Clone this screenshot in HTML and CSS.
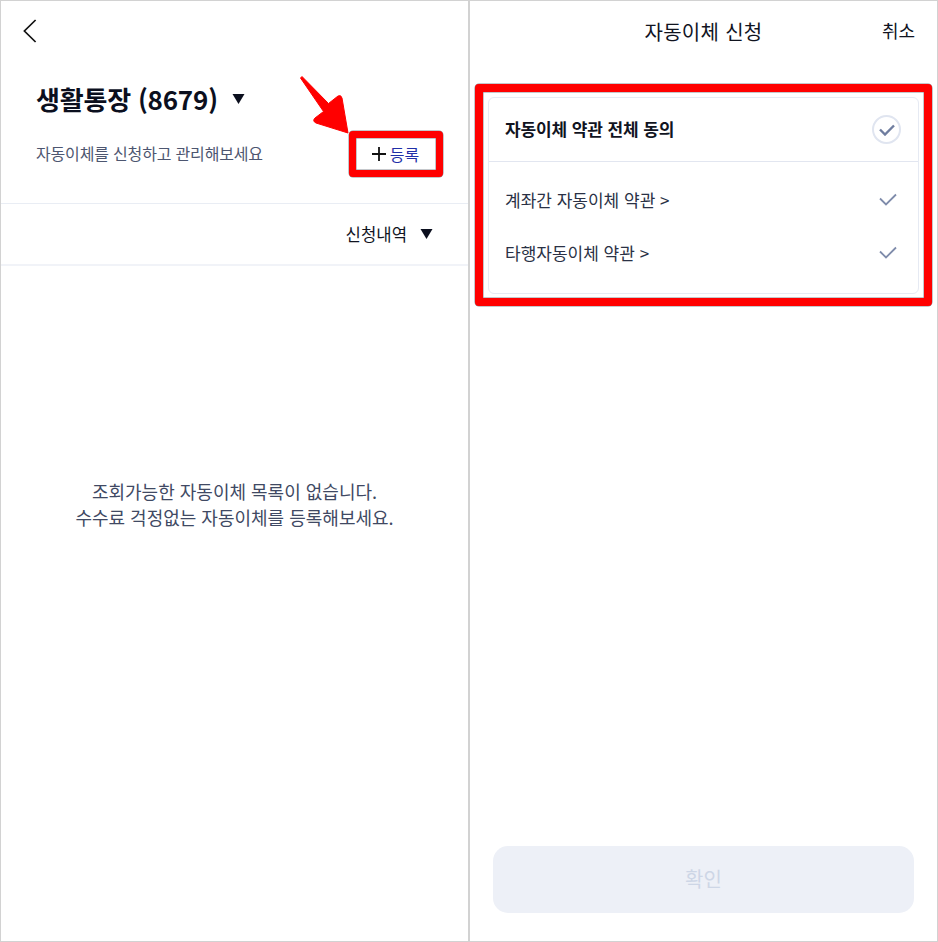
FILE: index.html
```html
<!DOCTYPE html>
<html lang="ko">
<head>
<meta charset="utf-8">
<title>자동이체</title>
<link rel="stylesheet" href="styles.css">
</head>
<body>
<div class="page">
  <section class="panel left">
    <div class="back-row">
      <svg class="back" width="14" height="24" viewBox="0 0 14 24"><path d="M12.6 1 1.4 12l11.2 11" fill="none" stroke="#111" stroke-width="1.7"/></svg>
    </div>
    <div class="account">
      <h1>생활통장 (8679)</h1>
      <svg class="tri" width="13" height="10" viewBox="0 0 13 10"><path d="M0.5 0h12L6.5 10z" fill="#0b0f1e"/></svg>
    </div>
    <div class="sub-row">
      <p class="sub">자동이체를 신청하고 관리해보세요</p>
      <div class="reg-frame">
        <svg width="14" height="14" viewBox="0 0 14 14"><path d="M7 0v14M0 7h14" stroke="#111" stroke-width="1.8"/></svg>
        <span class="reg-text">등록</span>
      </div>
    </div>
    <div class="filter">
      <span>신청내역</span>
      <svg class="tri" width="13" height="10" viewBox="0 0 13 10"><path d="M0.5 0h12L6.5 10z" fill="#0b0f1e"/></svg>
    </div>
    <div class="empty">
      <p>조회가능한 자동이체 목록이 없습니다.</p>
      <p>수수료 걱정없는 자동이체를 등록해보세요.</p>
    </div>
    <svg class="arrow" width="60" height="60" viewBox="0 0 60 60"><path d="M0.500 2 L2 0.500 L28.500 27.500 L38 20 Q41 18.500 42 22 L48 57 L16 47 Q12 45 15 42 L23.500 35.500 Z" fill="#f00" stroke="#f00" stroke-width="1" stroke-linejoin="round"/></svg>
  </section>
  <section class="panel right">
    <header class="top">
      <h2>자동이체 신청</h2>
      <span class="cancel">취소</span>
    </header>
    <div class="terms-frame">
      <div class="card">
        <div class="all">
          <strong>자동이체 약관 전체 동의</strong>
          <span class="circle"><svg width="16" height="12" viewBox="0 0 16 12"><path d="M1 5.500 6 10.500 15 1.500" fill="none" stroke="#6f7d9f" stroke-width="2.400"/></svg></span>
        </div>
        <div class="items">
          <div class="item"><span>계좌간 자동이체 약관 &gt;</span><svg width="18" height="13" viewBox="0 0 18 13"><path d="M1 5.500 7 11.500 17 1.500" fill="none" stroke="#7f8cab" stroke-width="1.800"/></svg></div>
          <div class="item"><span>타행자동이체 약관 &gt;</span><svg width="18" height="13" viewBox="0 0 18 13"><path d="M1 5.500 7 11.500 17 1.500" fill="none" stroke="#7f8cab" stroke-width="1.800"/></svg></div>
        </div>
      </div>
    </div>
    <button class="confirm" type="button">확인</button>
  </section>
</div>
</body>
</html>
```
FILE: styles.css
```css
* { box-sizing: border-box; }
html, body { margin: 0; padding: 0; background: #fff; }
body { font-family: "Noto Sans CJK KR", "Noto Sans", sans-serif; color: #11141f; }
h1, h2, p { margin: 0; }
.page { width: 938px; height: 942px; display: flex; background: #fff; }
.panel { position: relative; height: 942px; border: 1px solid #d2d2d2; display: flex; flex-direction: column; }
.left { width: 469px; }
.right { width: 469px; }
.back-row { height: 62px; padding: 18px 0 0 22px; }
.back { display: block; }
.account { display: flex; align-items: center; gap: 14px; height: 50px; padding: 21px 0 0 35px; }
.account h1 { font-size: 26px; font-weight: 700; line-height: 34px; color: #0b0f1e; letter-spacing: -0.2px; white-space: nowrap; }
.sub-row { display: flex; justify-content: space-between; align-items: center; height: 46px; margin-top: 18px; padding: 0 25px 0 35px; }
.sub { font-size: 16px; line-height: 22px; margin-top: -2px; color: #4d5670; letter-spacing: -0.17px; white-space: nowrap; }
.reg-frame { width: 94px; height: 46px; border: 7.5px solid #f00; border-radius: 4px; box-shadow: 0 0 0 0.5px #8a8f98, inset 0 0 0 0.5px #8a8f98; display: flex; align-items: center; justify-content: center; gap: 4px; padding-right: 1px; background: #fff; }
.reg-text { font-size: 16px; line-height: 20px; color: #1f2fa8; }
.filter { display: flex; justify-content: flex-end; align-items: center; gap: 13px; height: 63px; margin-top: 26px; padding-right: 35px; border-top: 1px solid #e9edf4; border-bottom: 2px solid #f1f3f8; font-size: 16.7px; color: #11141f; }
.empty { margin-top: 212px; text-align: center; font-size: 18px; line-height: 26px; color: #404963; }
.arrow { position: absolute; left: 299px; top: 75px; }
.top { position: relative; height: 62px; display: flex; align-items: center; justify-content: center; }
.top h2 { font-size: 20px; font-weight: 400; line-height: 28px; color: #11141f; letter-spacing: 0.3px; }
.cancel { position: absolute; right: 22px; top: 16px; font-size: 18px; line-height: 26px; }
.terms-frame { width: 457px; height: 222px; margin: 21px 0 0 5px; border: 8px solid #f00; border-radius: 4px; box-shadow: 0 0 0 0.5px #8a8f98, inset 0 0 0 0.5px #8a8f98; padding: 5px 5px 4px; background: #fff; }
.card { height: 100%; border: 1.500px solid #e6eaf3; border-radius: 6px; }
.all { display: flex; justify-content: space-between; align-items: center; height: 64px; padding: 0 17px 0 16px; border-bottom: 1.500px solid #e2e6f0; }
.all strong { font-size: 17px; font-weight: 700; color: #11141f; letter-spacing: -0.1px; margin-top: -2px; }
.circle { width: 29px; height: 29px; border: 2px solid #e0e5f0; border-radius: 50%; display: flex; align-items: center; justify-content: center; }
.items { padding-top: 11px; }
.item { display: flex; justify-content: space-between; align-items: center; height: 53px; padding: 0 21px 0 16px; font-size: 17px; color: #2a3145; }
.confirm { width: 421px; height: 67px; margin: auto 0 28px 23px; padding-bottom: 3px; border: 0; border-radius: 15px; background: #edf0f7; color: #cdd6e6; font-family: inherit; font-size: 20px; }
```
